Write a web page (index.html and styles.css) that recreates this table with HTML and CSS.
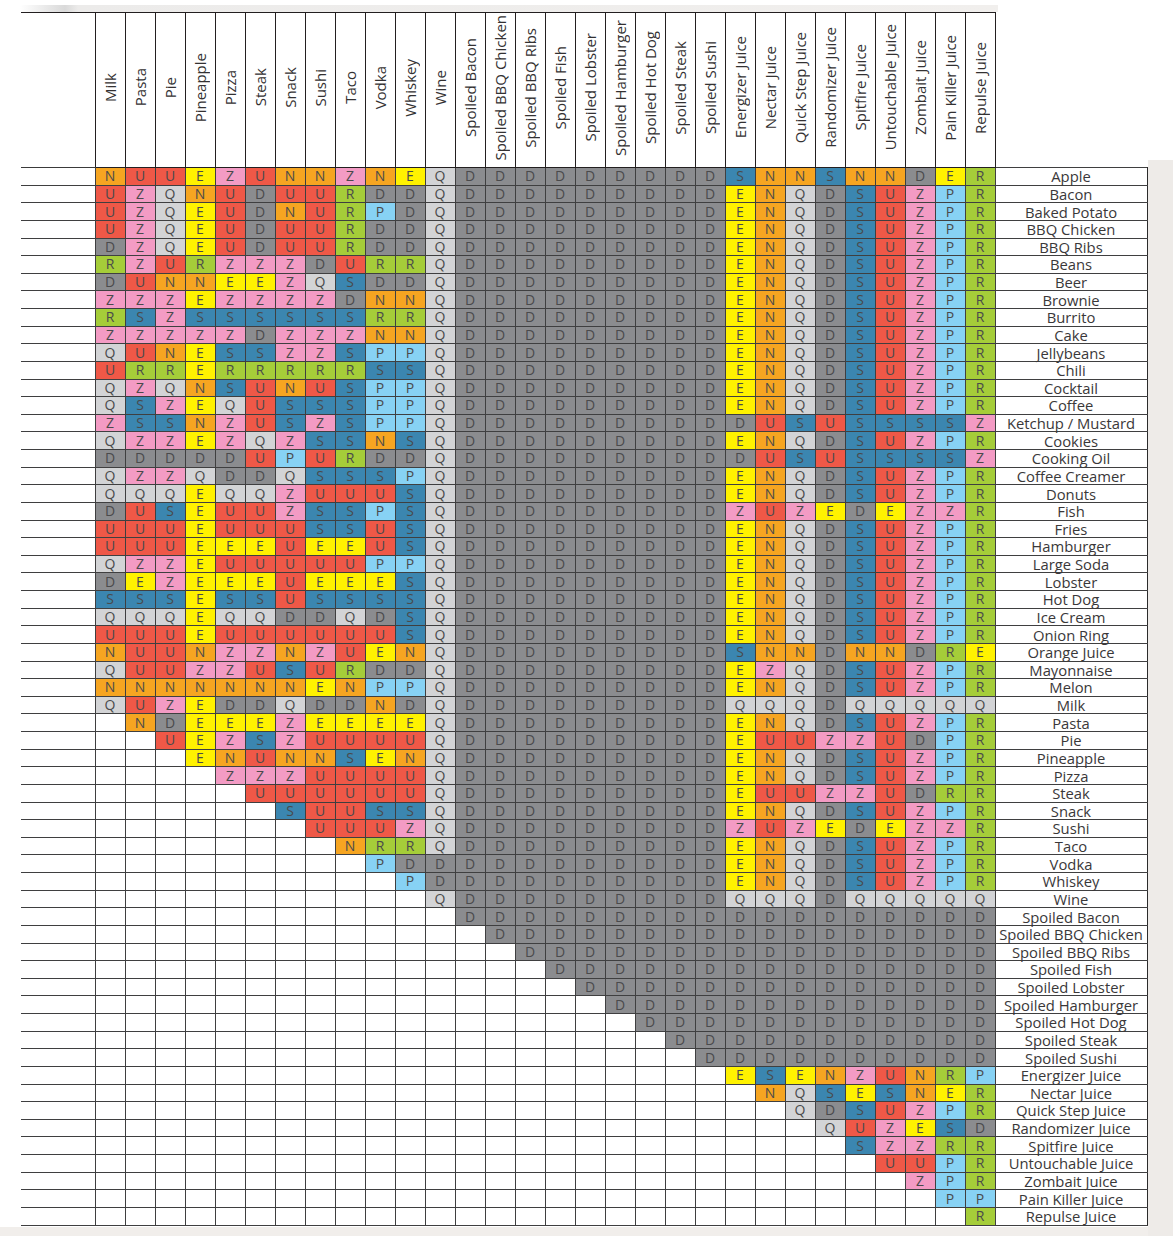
FILE: index.html
```html
<!DOCTYPE html>
<html lang="en">
<head>
<meta charset="utf-8">
<title>Food Combination Chart</title>
<link rel="stylesheet" href="styles.css">
</head>
<body>
<div class="page">
  <table class="chart">
    <colgroup>
      <col class="w-left">
      <col class="w-c"><col class="w-c"><col class="w-c"><col class="w-c"><col class="w-c"><col class="w-c"><col class="w-c"><col class="w-c"><col class="w-c"><col class="w-c">
      <col class="w-c"><col class="w-c"><col class="w-c"><col class="w-c"><col class="w-c"><col class="w-c"><col class="w-c"><col class="w-c"><col class="w-c"><col class="w-c">
      <col class="w-c"><col class="w-c"><col class="w-c"><col class="w-c"><col class="w-c"><col class="w-c"><col class="w-c"><col class="w-c"><col class="w-c"><col class="w-c">
      <col class="w-lab">
    </colgroup>
    <thead>
      <tr class="hrow">
        <th class="hl"></th>
        <th class="hc"><div class="vh">Milk</div></th>
        <th class="hc"><div class="vh">Pasta</div></th>
        <th class="hc"><div class="vh">Pie</div></th>
        <th class="hc"><div class="vh">Pineapple</div></th>
        <th class="hc"><div class="vh">Pizza</div></th>
        <th class="hc"><div class="vh">Steak</div></th>
        <th class="hc"><div class="vh">Snack</div></th>
        <th class="hc"><div class="vh">Sushi</div></th>
        <th class="hc"><div class="vh">Taco</div></th>
        <th class="hc"><div class="vh">Vodka</div></th>
        <th class="hc"><div class="vh">Whiskey</div></th>
        <th class="hc"><div class="vh">Wine</div></th>
        <th class="hc"><div class="vh">Spoiled Bacon</div></th>
        <th class="hc"><div class="vh">Spoiled BBQ Chicken</div></th>
        <th class="hc"><div class="vh">Spoiled BBQ Ribs</div></th>
        <th class="hc"><div class="vh">Spoiled Fish</div></th>
        <th class="hc"><div class="vh">Spoiled Lobster</div></th>
        <th class="hc"><div class="vh">Spoiled Hamburger</div></th>
        <th class="hc"><div class="vh">Spoiled Hot Dog</div></th>
        <th class="hc"><div class="vh">Spoiled Steak</div></th>
        <th class="hc"><div class="vh">Spoiled Sushi</div></th>
        <th class="hc"><div class="vh">Energizer Juice</div></th>
        <th class="hc"><div class="vh">Nectar Juice</div></th>
        <th class="hc"><div class="vh">Quick Step Juice</div></th>
        <th class="hc"><div class="vh">Randomizer Juice</div></th>
        <th class="hc"><div class="vh">Spitfire Juice</div></th>
        <th class="hc"><div class="vh">Untouchable Juice</div></th>
        <th class="hc"><div class="vh">Zombait Juice</div></th>
        <th class="hc"><div class="vh">Pain Killer Juice</div></th>
        <th class="hc"><div class="vh">Repulse Juice</div></th>
        <th class="hlab"></th>
      </tr>
    </thead>
    <tbody id="rows"></tbody>
  </table>
</div>
<script src="script.js"></script>
</body>
</html>
```
FILE: styles.css
```css
html, body {
  margin: 0;
  padding: 0;
  background: #ffffff;
}

body {
  font-family: "Open Sans", "Noto Sans", "DejaVu Sans", sans-serif;
  color: #414042;
}

.page {
  width: 1173px;
  height: 1236px;
  overflow: hidden;
  box-sizing: border-box;
  padding: 12px 0 0 21px;
  background:
    linear-gradient(90deg, #ffffff 0, #d9d9d9 45px, #ecebea 58px, #f1efed 100%) no-repeat 20px 5px / 978px 7px,
    linear-gradient(#eeebe8, #eeebe8) no-repeat 1148px 160px / 25px 1076px,
    linear-gradient(#f1eeeb, #f1eeeb) no-repeat 0 1227px / 1173px 9px,
    #ffffff;
}

.chart {
  border-collapse: collapse;
  table-layout: fixed;
  width: 1126px;
}

.w-left { width: 74px; }
.w-c { width: 30px; }
.w-lab { width: 152px; }

/* header */
.hrow th {
  height: 154px;
  padding: 0;
  background: #ffffff;
  font-weight: 400;
}

.hl {
  border-top: 1px solid #231f20;
  border-left: none;
  border-bottom: 1px solid #3a3a3a;
}

.hc {
  border: 1px solid #231f20;
  text-align: center;
  vertical-align: middle;
}

.hlab {
  border: none;
  background: #ffffff;
}

.vh {
  display: inline-block;
  writing-mode: vertical-rl;
  transform: rotate(180deg);
  font-size: 15px;
  line-height: 20px;
  color: #333132;
  white-space: nowrap;
}

/* body rows */
.r td {
  height: 16.63px;
  padding: 0;
  border: 1px solid #3f3f40;
  font-size: 14px;
  line-height: 16px;
  text-align: center;
  vertical-align: middle;
  white-space: nowrap;
}

.r td.l {
  border-left: none;
  border-right: 1px solid #3f3f40;
}

.r td.c {
  color: #4a4a4c;
}

.r td.lab {
  font-size: 14.8px;
  line-height: 16px;
  color: #3a3839;
  background: #ffffff;
  border-right: 1px solid #2b2b2b;
}

.kN { background: #f6a521; }
.kU { background: #ef5847; }
.kE { background: #fff200; }
.kZ { background: #f39bc4; }
.kQ { background: #d3d4d6; }
.kD { background: #8b8c8f; }
.kR { background: #a5cd39; }
.kS { background: #3b86b0; }
.kP { background: #87d2f4; }
```
FILE: script.js
```js
(function () {
  var D9 = "DDDDDDDDD";
  var STD = "ENQDSUZPR";
  var data = [
    ["Apple", "NUUEZUNNZNEQ" + D9 + "SNNSNNDER"],
    ["Bacon", "UZQNUDUURDDQ" + D9 + STD],
    ["Baked Potato", "UZQEUDNURPDQ" + D9 + STD],
    ["BBQ Chicken", "UZQEUDUURDDQ" + D9 + STD],
    ["BBQ Ribs", "DZQEUDUURDDQ" + D9 + STD],
    ["Beans", "RZURZZZDURRQ" + D9 + STD],
    ["Beer", "DUNNEEZQSDDQ" + D9 + STD],
    ["Brownie", "ZZZEZZZZDNNQ" + D9 + STD],
    ["Burrito", "RSZSSSSSSRRQ" + D9 + STD],
    ["Cake", "ZZZZZDZZZNNQ" + D9 + STD],
    ["Jellybeans", "QUNESSZZSPPQ" + D9 + STD],
    ["Chili", "URRERRRRRSSQ" + D9 + STD],
    ["Cocktail", "QZQNSUNUSPPQ" + D9 + STD],
    ["Coffee", "QSZEQUSSSPPQ" + D9 + STD],
    ["Ketchup / Mustard", "ZSSNZUSZSPPQ" + D9 + "DUSUSSSSZ"],
    ["Cookies", "QZZEZQZSSNSQ" + D9 + STD],
    ["Cooking Oil", "DDDDDUPURDDQ" + D9 + "DUSUSSSSZ"],
    ["Coffee Creamer", "QZZQDDQSSSPQ" + D9 + STD],
    ["Donuts", "QQQEQQZUUUSQ" + D9 + STD],
    ["Fish", "DUSEUUZSSPSQ" + D9 + "ZUZEDEZZR"],
    ["Fries", "UUUEUUUSSUSQ" + D9 + STD],
    ["Hamburger", "UUUEEEUEEUSQ" + D9 + STD],
    ["Large Soda", "QZZEUUUUUPPQ" + D9 + STD],
    ["Lobster", "DEZEEEUEEESQ" + D9 + STD],
    ["Hot Dog", "SSSESSUSSSSQ" + D9 + STD],
    ["Ice Cream", "QQQEQQDDQDSQ" + D9 + STD],
    ["Onion Ring", "UUUEUUUUUUSQ" + D9 + STD],
    ["Orange Juice", "NUUNZZNZUENQ" + D9 + "SNNDNNDRE"],
    ["Mayonnaise", "QUUZZUSURDDQ" + D9 + "EZQDSUZPR"],
    ["Melon", "NNNNNNNENPPQ" + D9 + STD],
    ["Milk", "QUZEDDQDDNDQ" + D9 + "QQQDQQQQQ"],
    ["Pasta", ".NDEEEZEEEEQ" + D9 + STD],
    ["Pie", "..UEZSZUUUUQ" + D9 + "EUUZZUDPR"],
    ["Pineapple", "...ENUNNSENQ" + D9 + STD],
    ["Pizza", "....ZZZUUUUQ" + D9 + STD],
    ["Steak", ".....UUUUUUQ" + D9 + "EUUZZUDRR"],
    ["Snack", "......SUUSSQ" + D9 + STD],
    ["Sushi", ".......UUUZQ" + D9 + "ZUZEDEZZR"],
    ["Taco", "........NRRQ" + D9 + STD],
    ["Vodka", ".........PDD" + D9 + STD],
    ["Whiskey", "..........PD" + D9 + STD],
    ["Wine", "...........Q" + D9 + "QQQDQQQQQ"]
  ];
  var spoiled = ["Spoiled Bacon", "Spoiled BBQ Chicken", "Spoiled BBQ Ribs", "Spoiled Fish",
    "Spoiled Lobster", "Spoiled Hamburger", "Spoiled Hot Dog", "Spoiled Steak", "Spoiled Sushi"];
  spoiled.forEach(function (name, i) {
    var k = 12 + i;
    data.push([name, ".".repeat(k) + "D".repeat(30 - k)]);
  });
  var juices = [
    ["Energizer Juice", "ESENZUNRP"],
    ["Nectar Juice", "NQSESNER"],
    ["Quick Step Juice", "QDSUZPR"],
    ["Randomizer Juice", "QUZESD"],
    ["Spitfire Juice", "SZZRR"],
    ["Untouchable Juice", "UUPR"],
    ["Zombait Juice", "ZPR"],
    ["Pain Killer Juice", "PP"],
    ["Repulse Juice", "R"]
  ];
  juices.forEach(function (j) {
    data.push([j[0], ".".repeat(30 - j[1].length) + j[1]]);
  });

  var tbody = document.getElementById("rows");
  var html = "";
  data.forEach(function (row) {
    var s = row[1];
    html += '<tr class="r"><td class="l"></td>';
    for (var i = 0; i < s.length; i++) {
      var ch = s.charAt(i);
      if (ch === ".") {
        html += '<td class="c"></td>';
      } else {
        html += '<td class="c k' + ch + '">' + ch + '</td>';
      }
    }
    html += '<td class="lab">' + row[0] + '</td></tr>';
  });
  tbody.innerHTML = html;
})();
```
